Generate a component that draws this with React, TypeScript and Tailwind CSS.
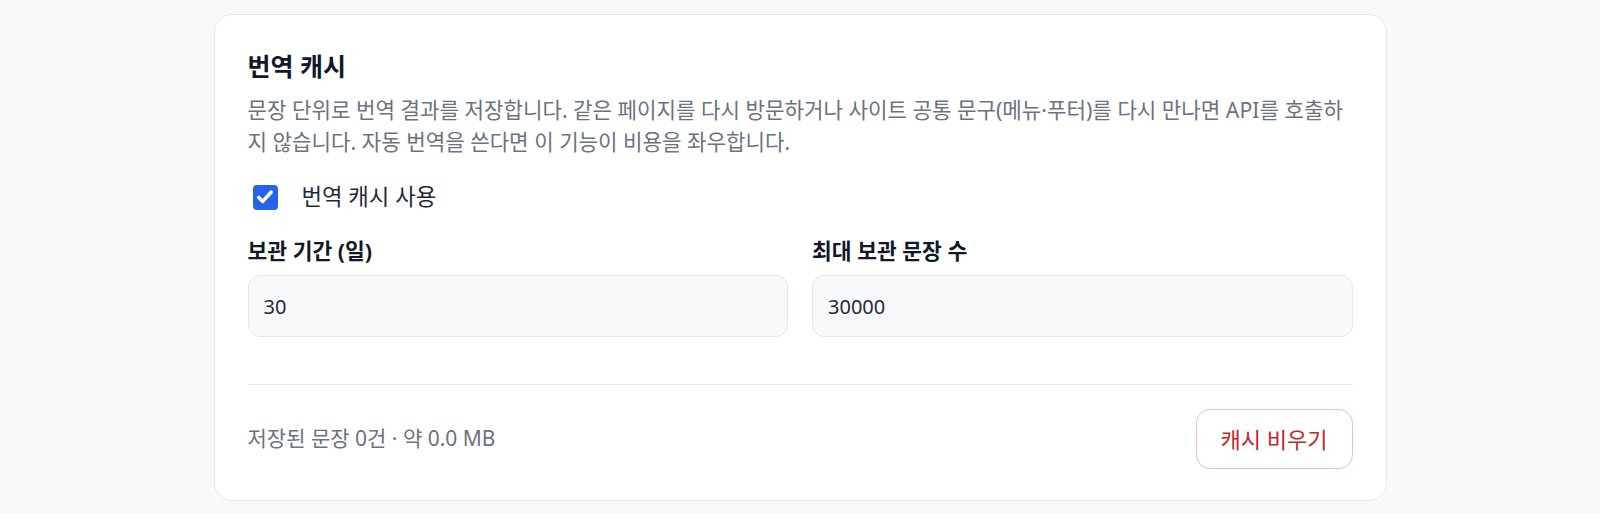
export default function App() {
  return (
    <main
      className="min-h-screen bg-[#f8f9fb] py-[14px]"
      style={{ fontFamily: '"Noto Sans", "Noto Sans CJK KR", sans-serif' }}
    >
      <section className="w-[1173px] mx-auto bg-white border border-[#e6e8ec] rounded-[18px] px-[33px] pt-[36px] pb-[31px]">
        <h2 className="text-[25px] leading-[30px] font-bold text-[#111827]">번역 캐시</h2>
        <p className="mt-[13px] text-[21.2px] leading-[32px] text-[#6b7280]">
          문장 단위로 번역 결과를 저장합니다. 같은 페이지를 다시 방문하거나 사이트 공통 문구(메뉴·푸터)를 다시 만나면 API를 호출하지 않습니다. 자동 번역을 쓴다면 이 기능이 비용을 좌우합니다.
        </p>

        <label className="mt-[25px] h-[28px] flex items-center gap-[24px] pl-[5px] cursor-pointer">
          <span className="w-[25px] h-[25px] rounded-[4px] bg-[#2563eb] flex items-center justify-center">
            <svg viewBox="0 0 24 24" className="w-[20px] h-[20px]" fill="none" stroke="white" strokeWidth="4.2" strokeLinecap="round" strokeLinejoin="round">
              <path d="M4.5 12.5l4.8 4.8L19.5 6" />
            </svg>
          </span>
          <span className="text-[22.3px] text-[#1f2937]">번역 캐시 사용</span>
        </label>

        <div className="mt-[27px] grid grid-cols-2 gap-6">
          <Field label="보관 기간 (일)" value="30" />
          <Field label="최대 보관 문장 수" value="30000" />
        </div>

        <div className="mt-[47px] border-t border-[#e5e7eb]" />

        <div className="mt-[24px] flex items-center justify-between">
          <span className="text-[21px] text-[#6b7280]">저장된 문장 0건 · 약 0.0 MB</span>
          <button className="h-[60px] px-[24px] rounded-[14px] border border-[#efbdbd] bg-white text-[22px] text-[#c0282d]">
            캐시 비우기
          </button>
        </div>
      </section>
    </main>
  )
}

function Field({ label, value }: { label: string; value: string }) {
  return (
    <div>
      <div className="text-[21.5px] leading-[26px] font-bold text-[#111827]">{label}</div>
      <input
        readOnly
        value={value}
        className="mt-[11px] w-full h-[62px] px-[15px] rounded-[12px] border border-[#e5e7eb] bg-[#f8f9fb] text-[20px] text-[#1f2937] outline-none"
      />
    </div>
  )
}
